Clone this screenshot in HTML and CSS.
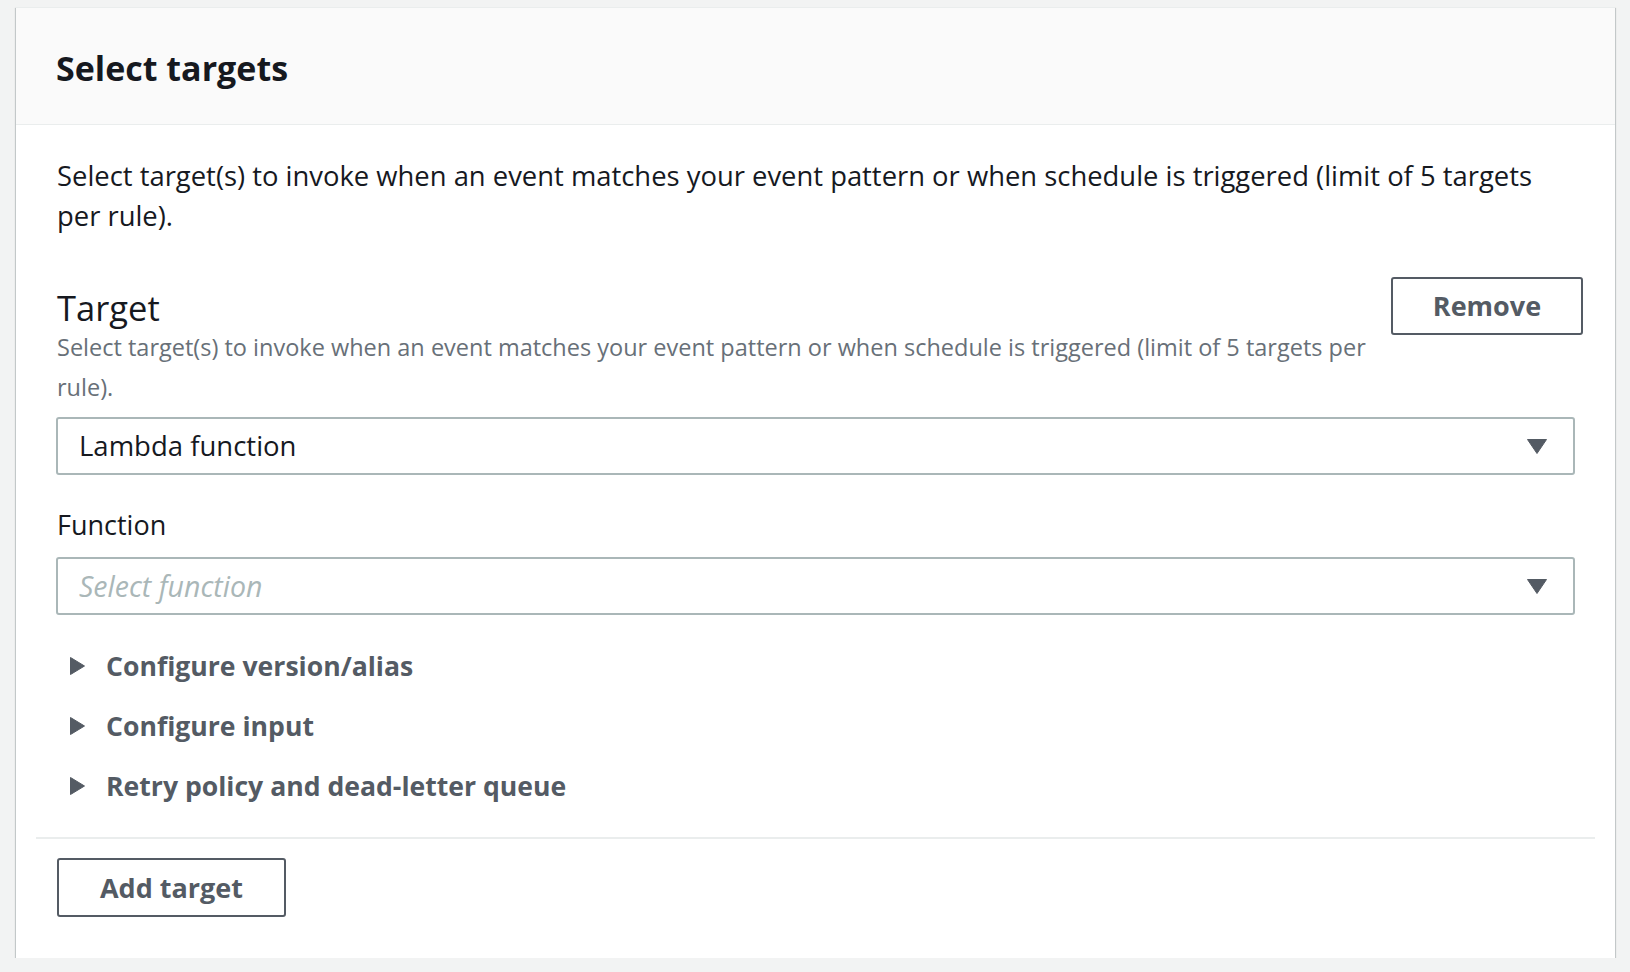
FILE: index.html
```html
<!DOCTYPE html>
<html lang="en">
<head>
<meta charset="utf-8">
<title>Select targets</title>
<link rel="stylesheet" href="styles.css">
</head>
<body>
<div class="card">
  <div class="card-header">
    <h2 class="card-title">Select targets</h2>
  </div>
  <div class="card-body">
    <p class="intro">Select target(s) to invoke when an event matches your event pattern or when schedule is triggered (limit of 5 targets per rule).</p>
    <div class="target">
      <div class="target-head">
        <div class="target-text">
          <h3 class="target-title">Target</h3>
          <p class="target-desc">Select target(s) to invoke when an event matches your event pattern or when schedule is triggered (limit of 5 targets per rule).</p>
        </div>
        <button class="btn btn-remove" type="button">Remove</button>
      </div>
      <div class="select">
        <span class="select-value">Lambda function</span>
        <svg class="caret" width="20" height="15" viewBox="0 0 20 15"><polygon points="0.5,0.5 19.5,0.5 10,14.5" fill="#545b64" stroke="#545b64" stroke-linejoin="round" stroke-width="1"/></svg>
      </div>
      <div class="field-label">Function</div>
      <div class="select">
        <span class="select-value placeholder">Select function</span>
        <svg class="caret" width="20" height="15" viewBox="0 0 20 15"><polygon points="0.5,0.5 19.5,0.5 10,14.5" fill="#545b64" stroke="#545b64" stroke-linejoin="round" stroke-width="1"/></svg>
      </div>
      <ul class="expanders">
        <li class="expander"><svg class="exp-icon" width="15" height="18" viewBox="0 0 15 18"><polygon points="0.5,0.5 14.5,9 0.5,17.5" fill="#545b64" stroke="#545b64" stroke-linejoin="round" stroke-width="1"/></svg><span>Configure version/alias</span></li>
        <li class="expander"><svg class="exp-icon" width="15" height="18" viewBox="0 0 15 18"><polygon points="0.5,0.5 14.5,9 0.5,17.5" fill="#545b64" stroke="#545b64" stroke-linejoin="round" stroke-width="1"/></svg><span>Configure input</span></li>
        <li class="expander"><svg class="exp-icon" width="15" height="18" viewBox="0 0 15 18"><polygon points="0.5,0.5 14.5,9 0.5,17.5" fill="#545b64" stroke="#545b64" stroke-linejoin="round" stroke-width="1"/></svg><span>Retry policy and dead-letter queue</span></li>
      </ul>
    </div>
    <div class="footer">
      <button class="btn btn-add" type="button">Add target</button>
    </div>
  </div>
</div>
</body>
</html>
```

FILE: styles.css
```css
* {
  box-sizing: border-box;
}

html, body {
  margin: 0;
  padding: 0;
  background: #f2f3f3;
}

body {
  font-family: "Open Sans", "Noto Sans", sans-serif;
  color: #16191f;
  padding-top: 7px;
}

.card {
  margin: 0 15px 0 16px;
  background: #ffffff;
  box-shadow: 0 1px 1px 0 rgba(0, 28, 36, 0.3), 1px 1px 1px 0 rgba(0, 28, 36, 0.15), -1px 1px 1px 0 rgba(0, 28, 36, 0.15);
  border-top: 1px solid #eaeded;
}

.card-header {
  background: #fafafa;
  border-bottom: 1px solid #eaeded;
  padding: 40px 40px 36px;
}

.card-title {
  margin: 0;
  font-size: 34px;
  line-height: 40px;
  font-weight: 700;
  color: #16191f;
}

.card-body {
  padding: 20px 20px 20px;
}

.intro {
  margin: 0;
  padding: 11px 40px 0 21px;
  font-size: 27.4px;
  line-height: 40px;
}

.target {
  margin-top: 41px;
  padding: 0 20px 21px;
  border-bottom: 2px solid #eaeded;
}

.target-head {
  display: flex;
  align-items: flex-start;
  gap: 12px;
  padding-left: 1px;
}

.target-text {
  flex: 1;
  min-width: 0;
  padding-top: 12px;
}

.target-title {
  margin: 0;
  font-size: 34.5px;
  line-height: 38px;
  font-weight: 400;
  color: #16191f;
}

.target-desc {
  margin: 0;
  font-size: 23.5px;
  line-height: 40px;
  color: #687078;
}

.btn {
  font-family: "Open Sans", "Noto Sans", sans-serif;
  font-size: 27px;
  font-weight: 700;
  line-height: 54px;
  padding: 0 40px;
  color: #545b64;
  background: #ffffff;
  border: 2px solid #545b64;
  border-radius: 3px;
  cursor: pointer;
}

.btn-remove {
  flex: none;
  width: 192px;
  padding: 0;
  margin-right: -8px;
}

.btn-add {
  width: 229px;
  padding: 0;
  line-height: 55px;
}

.select {
  margin-top: 10px;
  height: 58px;
  display: flex;
  align-items: center;
  justify-content: space-between;
  border: 2px solid #aab7b8;
  border-radius: 3px;
  padding: 0 26px 0 21px;
  background: #ffffff;
}

.select-value {
  font-size: 27.5px;
  line-height: 54px;
  color: #16191f;
}

.select-value.placeholder {
  font-size: 28.5px;
  font-style: italic;
  color: #aab7b8;
}

.caret {
  display: block;
  flex: none;
}

.field-label {
  margin-top: 30px;
  padding-left: 1px;
  font-size: 27px;
  line-height: 40px;
  color: #16191f;
}

.field-label + .select {
  margin-top: 12px;
}

.expanders {
  list-style: none;
  margin: 21px 0 0;
  padding: 0;
}

.expander {
  display: flex;
  align-items: center;
  height: 60px;
  padding-left: 14px;
  font-size: 26.6px;
  font-weight: 700;
  color: #545b64;
}

.exp-icon {
  display: block;
  flex: none;
  margin-right: 21px;
}

.footer {
  padding: 19px 21px 21px;
}
```
